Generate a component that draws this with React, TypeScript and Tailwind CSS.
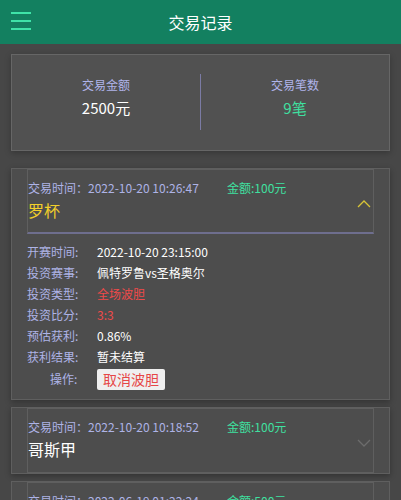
import React from 'react';

const rows = [
  { label: '开赛时间:', value: '2022-10-20 23:15:00', red: false },
  { label: '投资赛事:', value: '佩特罗鲁vs圣格奥尔', red: false },
  { label: '投资类型:', value: '全场波胆', red: true },
  { label: '投资比分:', value: '3:3', red: true },
  { label: '预估获利:', value: '0.86%', red: false },
  { label: '获利结果:', value: '暂未结算', red: false },
];

function Chevron({ up }: { up: boolean }) {
  return (
    <svg width="14" height="8" viewBox="0 0 14 8" className="mt-[20px] shrink-0">
      <path
        d={up ? 'M1 7 L7 1 L13 7' : 'M1 1 L7 7 L13 1'}
        fill="none"
        stroke={up ? '#d8c437' : '#6c6c6c'}
        strokeWidth="1.3"
      />
    </svg>
  );
}

function OrderHeader({ time, amount, name, open }: { time: string; amount: string; name: string; open: boolean }) {
  return (
    <div className={`mx-[15px] flex h-[65px] items-start border border-[#5f5f5f] pr-[2px] pt-[10px] ${open ? 'border-b-2 border-b-[#6e6e8e]' : ''}`}>
      <div className="flex-1">
        <div className="flex text-[12px] leading-[16px]">
          <span className="w-[199px] text-[#aeb3e6]">交易时间：{time}</span>
          <span className="text-[#3fe0a0]">金额:{amount}</span>
        </div>
        <div className={`mt-[3px] text-[16px] leading-[22px] ${open ? 'text-[#f2cf2a]' : 'text-white'}`}>{name}</div>
      </div>
      <Chevron up={open} />
    </div>
  );
}

export default function App() {
  return (
    <div className="min-h-[500px] bg-[#474747] font-['Noto_Sans_CJK_SC',sans-serif]">
      <div className="relative flex h-[44px] items-center justify-center bg-[#138060]">
        <div className="absolute left-[11px] top-[12px] flex w-[20px] flex-col gap-[6px]">
          <span className="h-[2px] bg-[#3fe3a8]" />
          <span className="h-[2px] bg-[#3fe3a8]" />
          <span className="h-[2px] bg-[#3fe3a8]" />
        </div>
        <h1 className="text-[16px] text-white">交易记录</h1>
      </div>

      <div className="mx-[11px] mt-[10px] flex h-[97px] items-start border border-[#666] bg-[#515151] shadow-[0_2px_6px_rgba(0,0,0,0.25)]">
        <div className="flex-1 pt-[22px] text-center">
          <div className="text-[12px] leading-[16px] text-[#b0b4ea]">交易金额</div>
          <div className="mt-[5px] text-[15px] leading-[20px] text-white">2500元</div>
        </div>
        <div className="mt-[19px] h-[56px] w-px bg-[#7b7ba4]" />
        <div className="flex-1 pt-[22px] text-center">
          <div className="text-[12px] leading-[16px] text-[#b0b4ea]">交易笔数</div>
          <div className="mt-[5px] text-[15px] leading-[20px] text-[#3fe0a0]">9笔</div>
        </div>
      </div>

      <div className="mx-[11px] mt-[17px] border border-[#5f5f5f] bg-[#4d4d4d] pb-[8px] shadow-[0_2px_6px_rgba(0,0,0,0.3)]">
        <OrderHeader time="2022-10-20 10:26:47" amount="100元" name="罗杯" open />
        <div className="mt-[7px] px-[15px] text-[12px]">
          {rows.map((r) => (
            <div key={r.label} className="flex h-[21px] items-center">
              <span className="w-[70px] text-[#aeb3e6]">{r.label}</span>
              <span className={r.red ? 'text-[#f04a4a]' : 'text-white'}>{r.value}</span>
            </div>
          ))}
          <div className="flex h-[24px] items-center">
            <span className="w-[70px] pl-[23px] text-[#aeb3e6]">操作:</span>
            <button className="h-[21px] rounded-[2px] bg-[#efefef] px-[6px] text-[14px] leading-[21px] text-[#e64646]">取消波胆</button>
          </div>
        </div>
      </div>

      <div className="mx-[11px] mt-[7px] border border-[#5f5f5f] bg-[#4d4d4d] shadow-[0_2px_6px_rgba(0,0,0,0.3)]">
        <OrderHeader time="2022-10-20 10:18:52" amount="100元" name="哥斯甲" open={false} />
      </div>

      <div className="mx-[11px] mt-[7px] border border-[#5f5f5f] bg-[#4d4d4d]">
        <OrderHeader time="2022-06-19 01:22:24" amount="500元" name="英超" open={false} />
      </div>
    </div>
  );
}
